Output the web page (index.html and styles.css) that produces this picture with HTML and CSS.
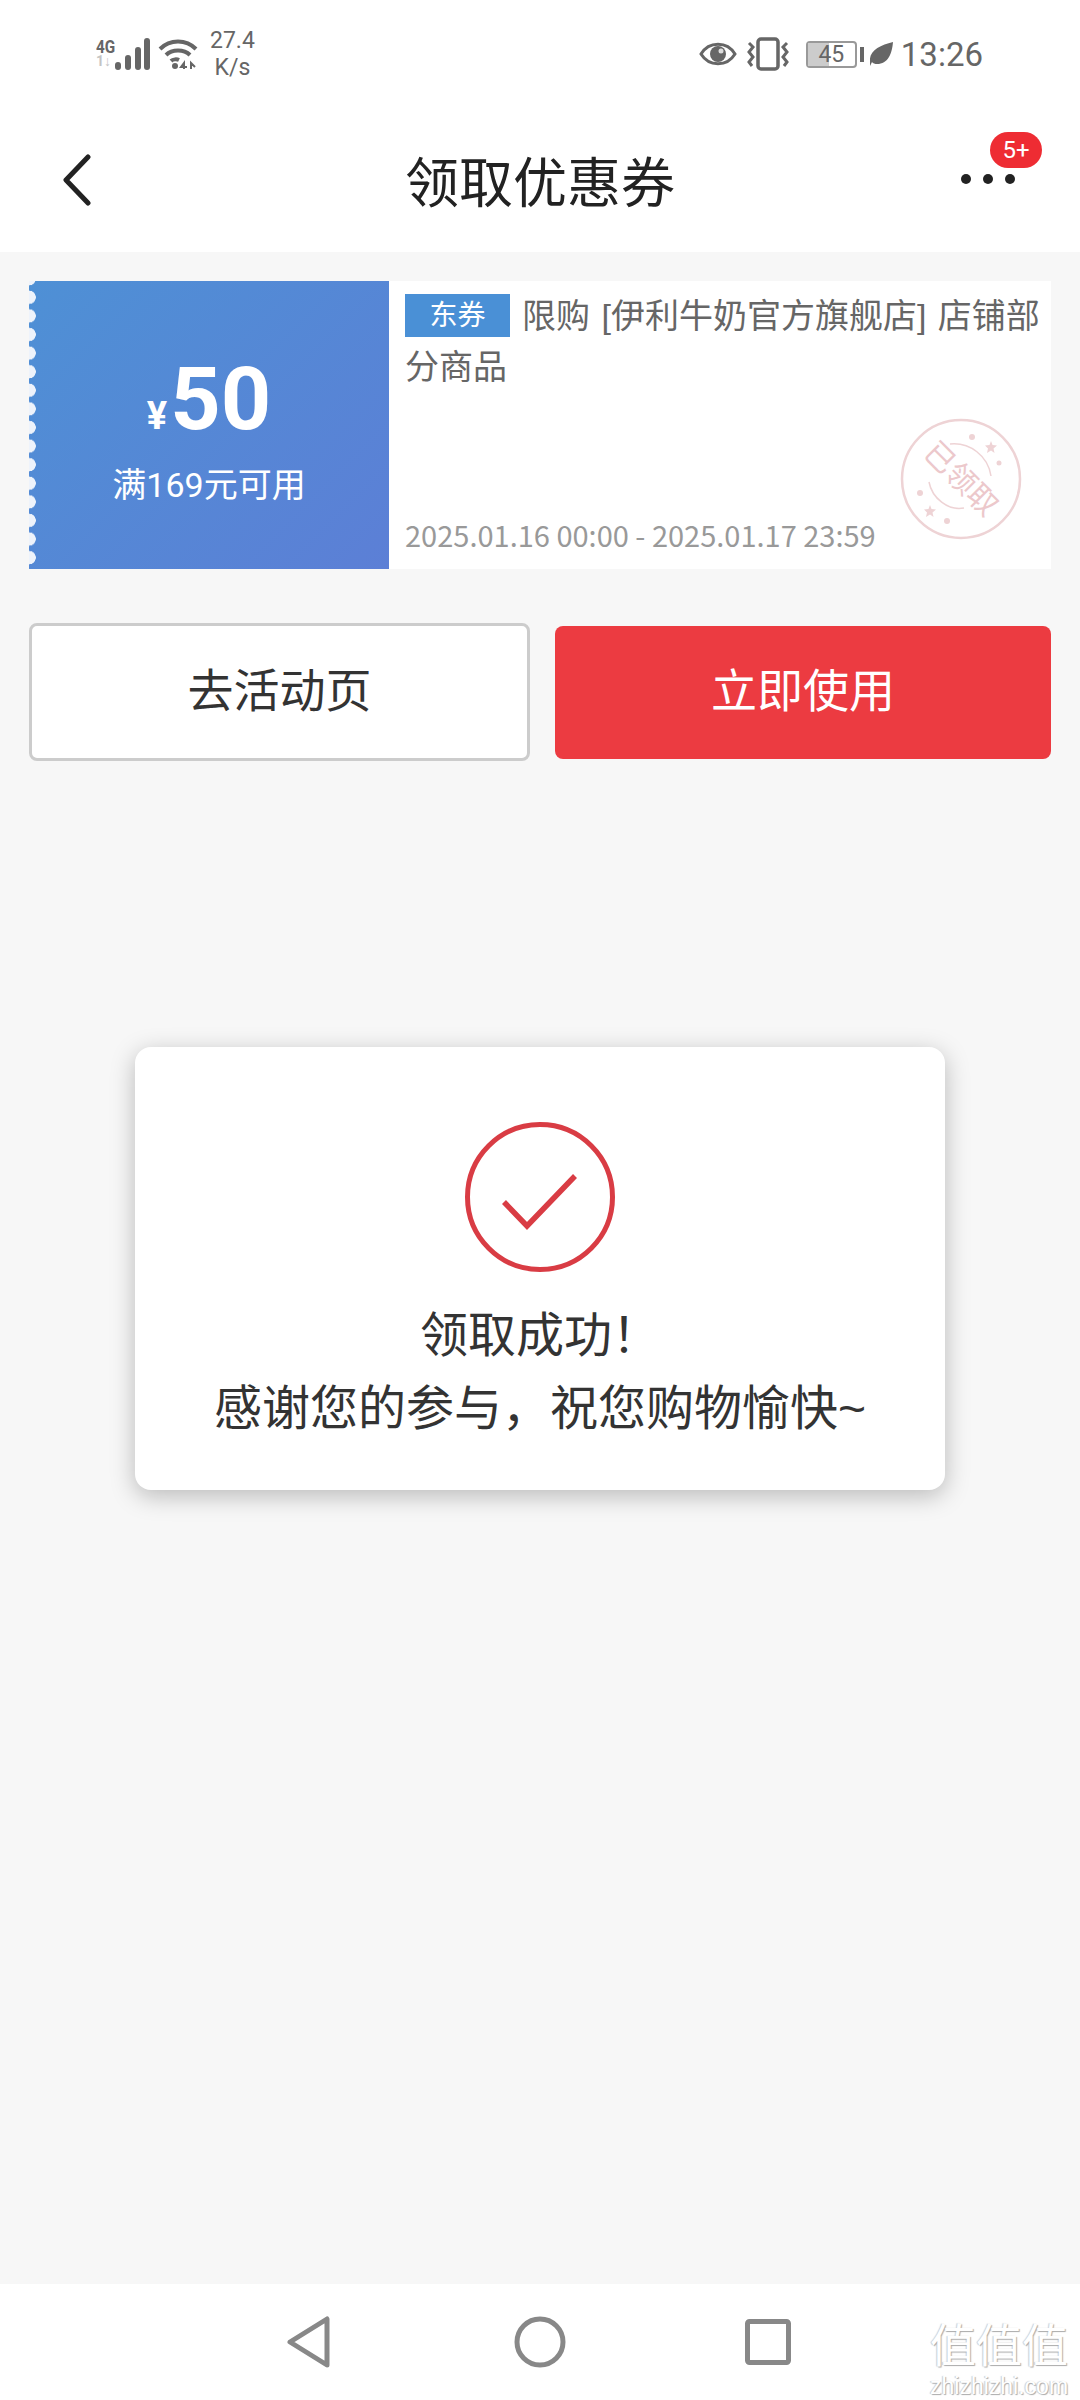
FILE: index.html
```html
<!DOCTYPE html>
<html lang="zh-CN">

<head>
    <meta charset="UTF-8">
    <meta name="viewport" content="width=device-width, initial-scale=1.0">
    <title>领取优惠券</title>
    <link rel="stylesheet" href="styles.css">
</head>

<body>
    <div class="screen">
        <div class="status-bar">
            <div class="status-left">
                <div class="net-type">
                    <span class="net-4g">4G</span>
                    <span class="net-sim">1↓</span>
                </div>
                <svg class="signal" width="35" height="32" viewBox="0 0 35 32" fill="#666">
                    <rect x="0" y="24" width="6" height="8" rx="3" />
                    <rect x="10" y="17" width="6" height="15" rx="3" />
                    <rect x="20" y="9" width="6" height="23" rx="3" />
                    <rect x="29" y="0" width="6" height="32" rx="3" />
                </svg>
                <svg class="wifi" width="40" height="32" viewBox="0 0 40 32" fill="none" stroke="#666" stroke-width="4">
                    <path d="M2 11C12 1 28 1 38 11" />
                    <path d="M8 17C14 11 26 11 32 17" />
                    <path d="M13 23C15 21 19 21 21 22" />
                    <circle cx="17" cy="28" r="3" fill="#666" stroke="none" />
                    <path d="M26 31L26 25L23 29H29M33 31V25L37 29" stroke-width="2" />
                </svg>
                <div class="net-speed">
                    <span>27.4</span>
                    <span>K/s</span>
                </div>
            </div>
            <div class="status-right">
                <svg width="38" height="28" viewBox="0 0 38 28" fill="none">
                    <path d="M2 14C10 1 28 1 36 14C28 27 10 27 2 14Z" stroke="#666" stroke-width="3" />
                    <circle cx="19" cy="14" r="8" fill="#666" />
                    <circle cx="22" cy="11" r="2.5" fill="#ddd" />
                </svg>
                <svg class="vibrate" width="44" height="34" viewBox="0 0 44 34" fill="none" stroke="#666">
                    <rect x="12" y="2" width="20" height="30" rx="3" stroke-width="3.5" />
                    <path d="M3 6L7 10L3 15L7 20L3 25L6 29" stroke-width="3" />
                    <path d="M41 6L37 10L41 15L37 20L41 25L38 29" stroke-width="3" />
                </svg>
                <div class="battery">
                    <div class="battery-body">
                        <div class="battery-fill"></div>
                        <span class="battery-num">45</span>
                    </div>
                    <div class="battery-nub"></div>
                </div>
                <svg class="leaf" width="23" height="24" viewBox="0 0 23 24">
                    <path d="M23 0C22 12 18 22 7 22C5 22 3 21.500 2 20L0 24L0 19C-1 9 10 3 23 0Z" fill="#666" />
                </svg>
                <span class="clock">13:26</span>
            </div>
        </div>

        <header class="page-head">
            <a class="head-back" href="#">
                <svg width="30" height="52" viewBox="0 0 30 52" fill="none" stroke="#222" stroke-width="5"
                    stroke-linecap="round" stroke-linejoin="round">
                    <path d="M26 3L4 26L26 49" />
                </svg>
            </a>
            <h1 class="head-title">领取优惠券</h1>
            <div class="head-more">
                <span class="dot"></span>
                <span class="dot"></span>
                <span class="dot"></span>
                <span class="badge">5+</span>
            </div>
        </header>

        <main class="content">
            <section class="coupon">
                <div class="coupon-left">
                    <div class="coupon-amount"><span class="coupon-yen">¥</span>50</div>
                    <div class="coupon-limit">满169元可用</div>
                </div>
                <div class="coupon-info">
                    <p class="coupon-desc"><span class="coupon-tag">东券</span>限购 [伊利牛奶官方旗舰店] 店铺部分商品</p>
                    <p class="coupon-date">2025.01.16 00:00 - 2025.01.17 23:59</p>
                    <div class="stamp">
                        <svg width="122" height="122" viewBox="0 0 122 122" fill="none" stroke="#eed3d5">
                            <circle cx="61" cy="61" r="59" stroke-width="2.500" />
                            <path d="M50 26C70 24 88 38 91 58" stroke-width="1.500" />
                            <path d="M29 64C32 80 48 93 64 90" stroke-width="1.500" />
                            <path d="M91 23L92.500 27L97 27.500L93.500 30.500L94.500 35L91 32.500L87 35L88 30.500L85 27.500L89.500 27Z" fill="#eed3d5" stroke="none" />
                            <path d="M30 87L31.500 91L36 91.500L32.500 94.500L33.500 99L30 96.500L26 99L27 94.500L24 91.500L28.500 91Z" fill="#eed3d5" stroke="none" />
                            <circle cx="72" cy="19" r="3" fill="#eed3d5" stroke="none" />
                            <circle cx="99" cy="45" r="2.500" fill="#eed3d5" stroke="none" />
                            <circle cx="20" cy="75" r="3" fill="#eed3d5" stroke="none" />
                            <circle cx="47" cy="103" r="3" fill="#eed3d5" stroke="none" />
                        </svg>
                        <span class="stamp-text">已领取</span>
                    </div>
                </div>
            </section>

            <div class="btn-row">
                <a class="btn btn-plain" href="#">去活动页</a>
                <a class="btn btn-red" href="#">立即使用</a>
            </div>
        </main>

        <nav class="nav-bar">
            <svg width="44" height="52" viewBox="0 0 44 52" fill="none" stroke="#888" stroke-width="5" stroke-linejoin="round">
                <path d="M40 3V49L3 26Z" />
            </svg>
            <svg width="52" height="52" viewBox="0 0 52 52" fill="none" stroke="#888" stroke-width="5">
                <circle cx="26" cy="26" r="23" />
            </svg>
            <svg class="nav-square" width="46" height="46" viewBox="0 0 46 46" fill="none" stroke="#888" stroke-width="5" stroke-linejoin="round">
                <rect x="2.500" y="2.500" width="41" height="41" rx="2" />
            </svg>
        </nav>

        <!-- 弹窗 -->
        <div class="toast">
            <svg class="toast-icon" width="150" height="150" viewBox="0 0 150 150" fill="none" stroke="#d93c44">
                <circle cx="75" cy="75" r="72.500" stroke-width="5" />
                <path d="M39 80L62 104L110 54" stroke-width="5.500" />
            </svg>
            <p class="toast-text">领取成功&#65281;<br>感谢您的参与&#65292;祝您购物愉快~</p>
        </div>

        <div class="watermark">
            <span class="watermark-cn">值值值</span>
            <span class="watermark-en">zhizhizhi.com</span>
        </div>
    </div>
</body>

</html>
```

FILE: styles.css
```css
* {
    box-sizing: border-box;
}

body {
    margin: 0;
    font-family: "Liberation Sans", "Noto Sans CJK SC", sans-serif;
    background-color: #f7f7f7;
}

p,
h1 {
    margin: 0;
}

a {
    text-decoration: none;
    color: inherit;
}

.screen {
    position: relative;
    display: flex;
    flex-direction: column;
    width: 1080px;
    height: 2400px;
    overflow: hidden;
}

/* 状态栏 */
.status-bar {
    display: flex;
    justify-content: space-between;
    align-items: center;
    height: 108px;
    padding: 0 97px 0 96px;
    background-color: #fff;
    color: #666;
}

.status-left,
.status-right {
    display: flex;
    align-items: center;
}

.net-type {
    display: flex;
    flex-direction: column;
    width: 19px;
    line-height: 15px;
}

.net-4g {
    font-family: "Roboto", sans-serif;
    font-size: 18px;
    font-weight: 700;
    transform: scaleX(0.85);
    transform-origin: left;
}

.net-sim {
    font-family: "Roboto", sans-serif;
    font-size: 14px;
    font-weight: 700;
    color: #c4c4c4;
}

.wifi {
    margin-left: 8px;
}

.net-speed {
    display: flex;
    flex-direction: column;
    align-items: center;
    margin-left: 12px;
    font-family: "Roboto", sans-serif;
    font-size: 23px;
    line-height: 27px;
}

.status-right svg {
    flex: none;
}

.vibrate {
    margin-left: 9px;
}

.battery {
    display: flex;
    align-items: center;
    margin-left: 16px;
}

.battery-body {
    position: relative;
    width: 51px;
    height: 27px;
    border: 2px solid #999;
    border-radius: 4px;
}

.battery-fill {
    width: 45%;
    height: 100%;
    background-color: #ccc;
}

.battery-num {
    position: absolute;
    top: 0;
    left: 0;
    width: 100%;
    font-family: "Roboto", sans-serif;
    font-size: 23px;
    line-height: 23px;
    text-align: center;
}

.battery-nub {
    width: 4px;
    height: 15px;
    margin-left: 3px;
    background-color: #666;
}

.leaf {
    margin-left: 6px;
}

.clock {
    margin-left: 8px;
    font-family: "Roboto", sans-serif;
    font-size: 33px;
}

/* 标题栏 */
.page-head {
    position: relative;
    display: flex;
    justify-content: center;
    align-items: center;
    height: 144px;
    padding-bottom: 2px;
    background-color: #fff;
}

.head-back {
    position: absolute;
    left: 62px;
    top: 46px;
    line-height: 0;
}

.head-title {
    font-size: 54px;
    font-weight: 400;
    color: #222;
}

.head-more {
    position: absolute;
    top: 0;
    left: 961px;
    display: flex;
    gap: 12px;
    padding-top: 66px;
}

.dot {
    width: 10px;
    height: 10px;
    border-radius: 50%;
    background-color: #222;
}

.badge {
    position: absolute;
    top: 24px;
    left: 29px;
    width: 52px;
    height: 36px;
    border-radius: 18px;
    background-color: #ee2c33;
    color: #fff;
    font-family: "Roboto", sans-serif;
    font-size: 24px;
    line-height: 36px;
    text-align: center;
}

/* 优惠券 */
.content {
    flex: 1;
    padding: 29px 29px 0;
}

.coupon {
    display: flex;
    height: 288px;
    background-color: #fff;
}

.coupon-left {
    position: relative;
    display: flex;
    flex-direction: column;
    align-items: center;
    width: 360px;
    padding-top: 73px;
    background: linear-gradient(135deg, #4e90d5, #5c7fd6);
    color: #fff;
}

.coupon-left::before {
    content: "";
    position: absolute;
    top: 0;
    bottom: 0;
    left: 0;
    width: 7px;
    background: radial-gradient(circle at 0 50%, #eef3fb 6.500px, transparent 7px) 0 7px / 7px 18.600px repeat-y;
}

.coupon-amount {
    font-family: "Roboto", sans-serif;
    font-size: 88px;
    font-weight: 700;
    line-height: 90px;
}

.coupon-yen {
    margin-right: 3px;
    font-size: 38px;
}

.coupon-limit {
    margin-top: -1px;
    font-family: "Roboto", "Noto Sans CJK SC", sans-serif;
    font-size: 34px;
    line-height: 50px;
}

.coupon-info {
    position: relative;
    display: flex;
    flex: 1;
    flex-direction: column;
    justify-content: space-between;
    padding: 10px 0 13px 16px;
}

.coupon-desc {
    font-size: 34px;
    line-height: 51px;
    color: #666;
    word-spacing: 2px;
}

.coupon-tag {
    display: inline-block;
    width: 105px;
    height: 43px;
    margin-right: 12px;
    background-color: #4a90d6;
    color: #fff;
    font-size: 28px;
    line-height: 43px;
    text-align: center;
    vertical-align: 3px;
}

.coupon-date {
    font-family: "Noto Sans CJK SC", sans-serif;
    font-size: 29px;
    line-height: 44px;
    color: #999;
}

.stamp {
    position: absolute;
    top: 137px;
    left: 511px;
    width: 122px;
    height: 122px;
    line-height: 0;
}

.stamp-text {
    position: absolute;
    top: 43px;
    left: 11px;
    width: 100px;
    color: #ecc8cb;
    font-size: 30px;
    line-height: 36px;
    text-align: center;
    transform: rotate(45deg);
}

/* 按钮 */
.btn-row {
    display: flex;
    align-items: center;
    gap: 25px;
    margin-top: 54px;
}

.btn {
    display: flex;
    justify-content: center;
    align-items: center;
    padding-bottom: 10px;
    border-radius: 8px;
    font-size: 46px;
}

.btn-plain {
    width: 501px;
    height: 138px;
    background-color: #fff;
    border: 3px solid #ccc;
    color: #333;
}

.btn-red {
    width: 496px;
    height: 133px;
    background-color: #ec3b41;
    color: #fff;
}

/* 弹窗 */
.toast {
    position: absolute;
    top: 1047px;
    left: 135px;
    display: flex;
    flex-direction: column;
    align-items: center;
    width: 810px;
    height: 443px;
    padding-top: 75px;
    background-color: #fff;
    border-radius: 16px;
    box-shadow: 0 6px 24px rgba(0, 0, 0, 0.25);
}

.toast-icon {
    flex: none;
}

.toast-text {
    margin-top: 27px;
    font-size: 48px;
    line-height: 73px;
    color: #333;
    text-align: center;
}

/* 底部导航 */
.nav-bar {
    display: flex;
    align-items: center;
    height: 116px;
    padding-left: 287px;
    background-color: #fff;
    gap: 183px;
}

.nav-square {
    margin-left: -4px;
}

.watermark {
    position: absolute;
    top: 2316px;
    left: 930px;
    display: flex;
    flex-direction: column;
    align-items: center;
    color: #fff;
    text-shadow: 1px 1px 1px #aaa, -1px 0 1px #ccc;
}

.watermark-cn {
    font-size: 46px;
    line-height: 60px;
}

.watermark-en {
    font-size: 23px;
    line-height: 20px;
}
```
